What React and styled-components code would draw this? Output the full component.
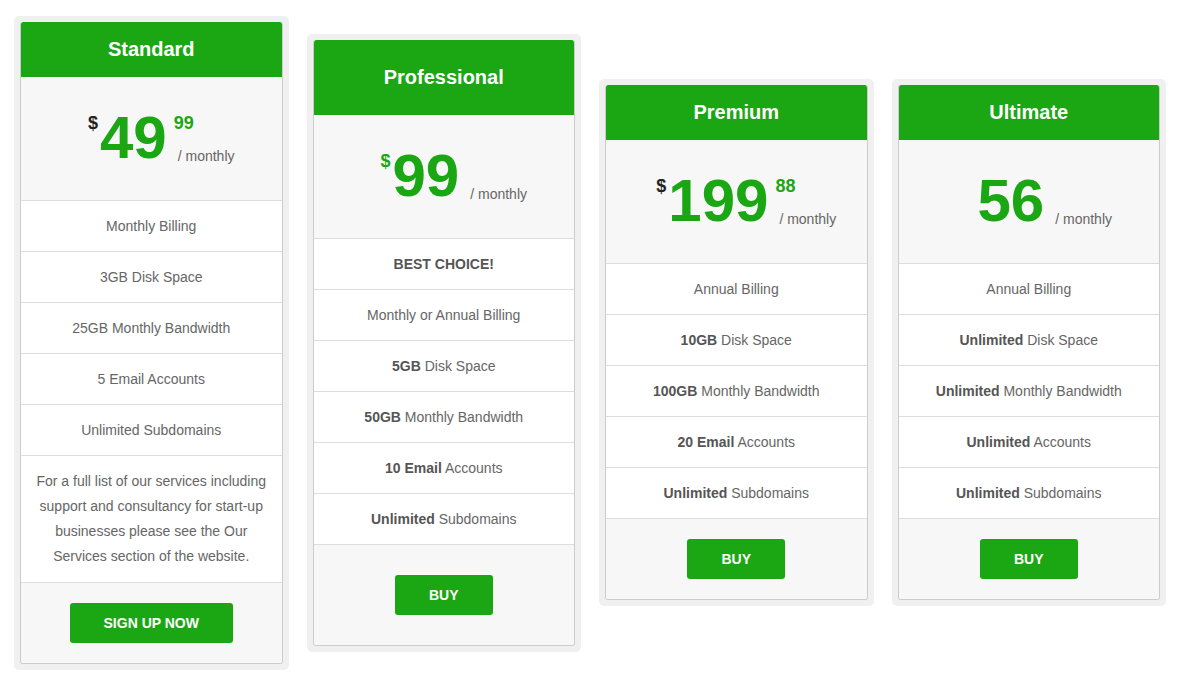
import React from "react";
import styled, { createGlobalStyle } from "styled-components";

const GREEN = "#1ba614";

const GlobalStyle = createGlobalStyle`
  html, body {
    margin: 0;
    padding: 0;
    background: #fff;
  }
  body {
    font-family: "Liberation Sans", Arial, sans-serif;
  }
`;

const Page = styled.div`
  display: flex;
  align-items: center;
  gap: 18px;
  height: 685px;
  padding: 0 12px 0 14px;
  box-sizing: border-box;
`;

const Column = styled.div`
  flex: 1;
  background: #f0f0f0;
  border-radius: 5px;
  padding: 6px;
`;

const Card = styled.div`
  border: 1px solid #cccccc;
  border-top: 0;
  border-radius: 3px;
  background: #fff;
  overflow: hidden;
`;

const Header = styled.div`
  margin: 0 -1px;
  background: ${GREEN};
  color: #fff;
  font-size: 20px;
  font-weight: bold;
  text-align: center;
  height: ${(p) => (p.$featured ? "75px" : "55px")};
  display: flex;
  align-items: center;
  justify-content: center;
  border-radius: 3px 3px 0 0;
`;

const PriceBox = styled.div`
  background: #f7f7f7;
  border-bottom: 1px solid #dddddd;
  padding: 31px 0 32px;
  display: flex;
  justify-content: center;
`;

const PriceGroup = styled.div`
  display: flex;
  height: 60px;
  padding-left: 20px;
`;

const Currency = styled.span`
  width: 12px;
  font-size: 18px;
  line-height: 18px;
  font-weight: bold;
  margin-top: 6px;
  color: ${(p) => (p.$green ? GREEN : "#222")};
`;

const Amount = styled.span`
  font-size: 60px;
  line-height: 60px;
  font-weight: bold;
  color: ${GREEN};
`;

const Side = styled.div`
  display: flex;
  flex-direction: column;
  justify-content: space-between;
  margin-left: 7px;
`;

const Cents = styled.span`
  font-size: 18px;
  line-height: 18px;
  font-weight: bold;
  color: ${GREEN};
  margin-top: 6px;
`;

const Period = styled.span`
  font-size: 14px;
  line-height: 14px;
  color: #666;
  margin-left: 4px;
  margin-bottom: 5px;
`;

const Feature = styled.div`
  height: 50px;
  border-bottom: 1px solid #dddddd;
  display: flex;
  align-items: center;
  justify-content: center;
  font-size: 14px;
  color: #666;

  b {
    color: #555;
  }
`;

const Note = styled.div`
  padding: 13px 12px;
  border-bottom: 1px solid #dddddd;
  font-size: 14px;
  line-height: 25px;
  color: #666;
  text-align: center;
`;

const Footer = styled.div`
  background: #f7f7f7;
  padding: ${(p) => (p.$featured ? "30px 0" : "20px 0")};
  display: flex;
  justify-content: center;
`;

const BuyButton = styled.button`
  height: 40px;
  padding: 0 34px;
  border: 0;
  border-radius: 3px;
  background: ${GREEN};
  color: #fff;
  font-family: "Liberation Sans", Arial, sans-serif;
  font-size: 14px;
  font-weight: bold;
  text-transform: uppercase;
  cursor: pointer;
`;

const plans = [
  {
    name: "Standard",
    currency: "$",
    amount: "49",
    cents: "99",
    features: [
      [null, "Monthly Billing"],
      [null, "3GB Disk Space"],
      [null, "25GB Monthly Bandwidth"],
      [null, "5 Email Accounts"],
      [null, "Unlimited Subdomains"],
    ],
    note: "For a full list of our services including support and consultancy for start-up businesses please see the Our Services section of the website.",
    button: "Sign up now",
  },
  {
    name: "Professional",
    featured: true,
    currency: "$",
    greenCurrency: true,
    amount: "99",
    features: [
      ["BEST CHOICE!", ""],
      [null, "Monthly or Annual Billing"],
      ["5GB", " Disk Space"],
      ["50GB", " Monthly Bandwidth"],
      ["10 Email", " Accounts"],
      ["Unlimited", " Subdomains"],
    ],
    button: "Buy",
  },
  {
    name: "Premium",
    currency: "$",
    amount: "199",
    cents: "88",
    features: [
      [null, "Annual Billing"],
      ["10GB", " Disk Space"],
      ["100GB", " Monthly Bandwidth"],
      ["20 Email", " Accounts"],
      ["Unlimited", " Subdomains"],
    ],
    button: "Buy",
  },
  {
    name: "Ultimate",
    amount: "56",
    features: [
      [null, "Annual Billing"],
      ["Unlimited", " Disk Space"],
      ["Unlimited", " Monthly Bandwidth"],
      ["Unlimited", " Accounts"],
      ["Unlimited", " Subdomains"],
    ],
    button: "Buy",
  },
];

const App = () => {
  return (
    <>
      <GlobalStyle />
      <Page>
        {plans.map((plan) => (
          <Column key={plan.name}>
            <Card>
              <Header $featured={plan.featured}>{plan.name}</Header>
              <PriceBox>
                <PriceGroup>
                  <Currency $green={plan.greenCurrency}>{plan.currency}</Currency>
                  <Amount>{plan.amount}</Amount>
                  <Side>
                    <Cents>{plan.cents}</Cents>
                    <Period>/ monthly</Period>
                  </Side>
                </PriceGroup>
              </PriceBox>
              {plan.features.map(([bold, rest], i) => (
                <Feature key={i}>
                  <span>
                    {bold && <b>{bold}</b>}
                    {rest}
                  </span>
                </Feature>
              ))}
              {plan.note && <Note>{plan.note}</Note>}
              <Footer $featured={plan.featured}>
                <BuyButton>{plan.button}</BuyButton>
              </Footer>
            </Card>
          </Column>
        ))}
      </Page>
    </>
  );
};

export default App;
